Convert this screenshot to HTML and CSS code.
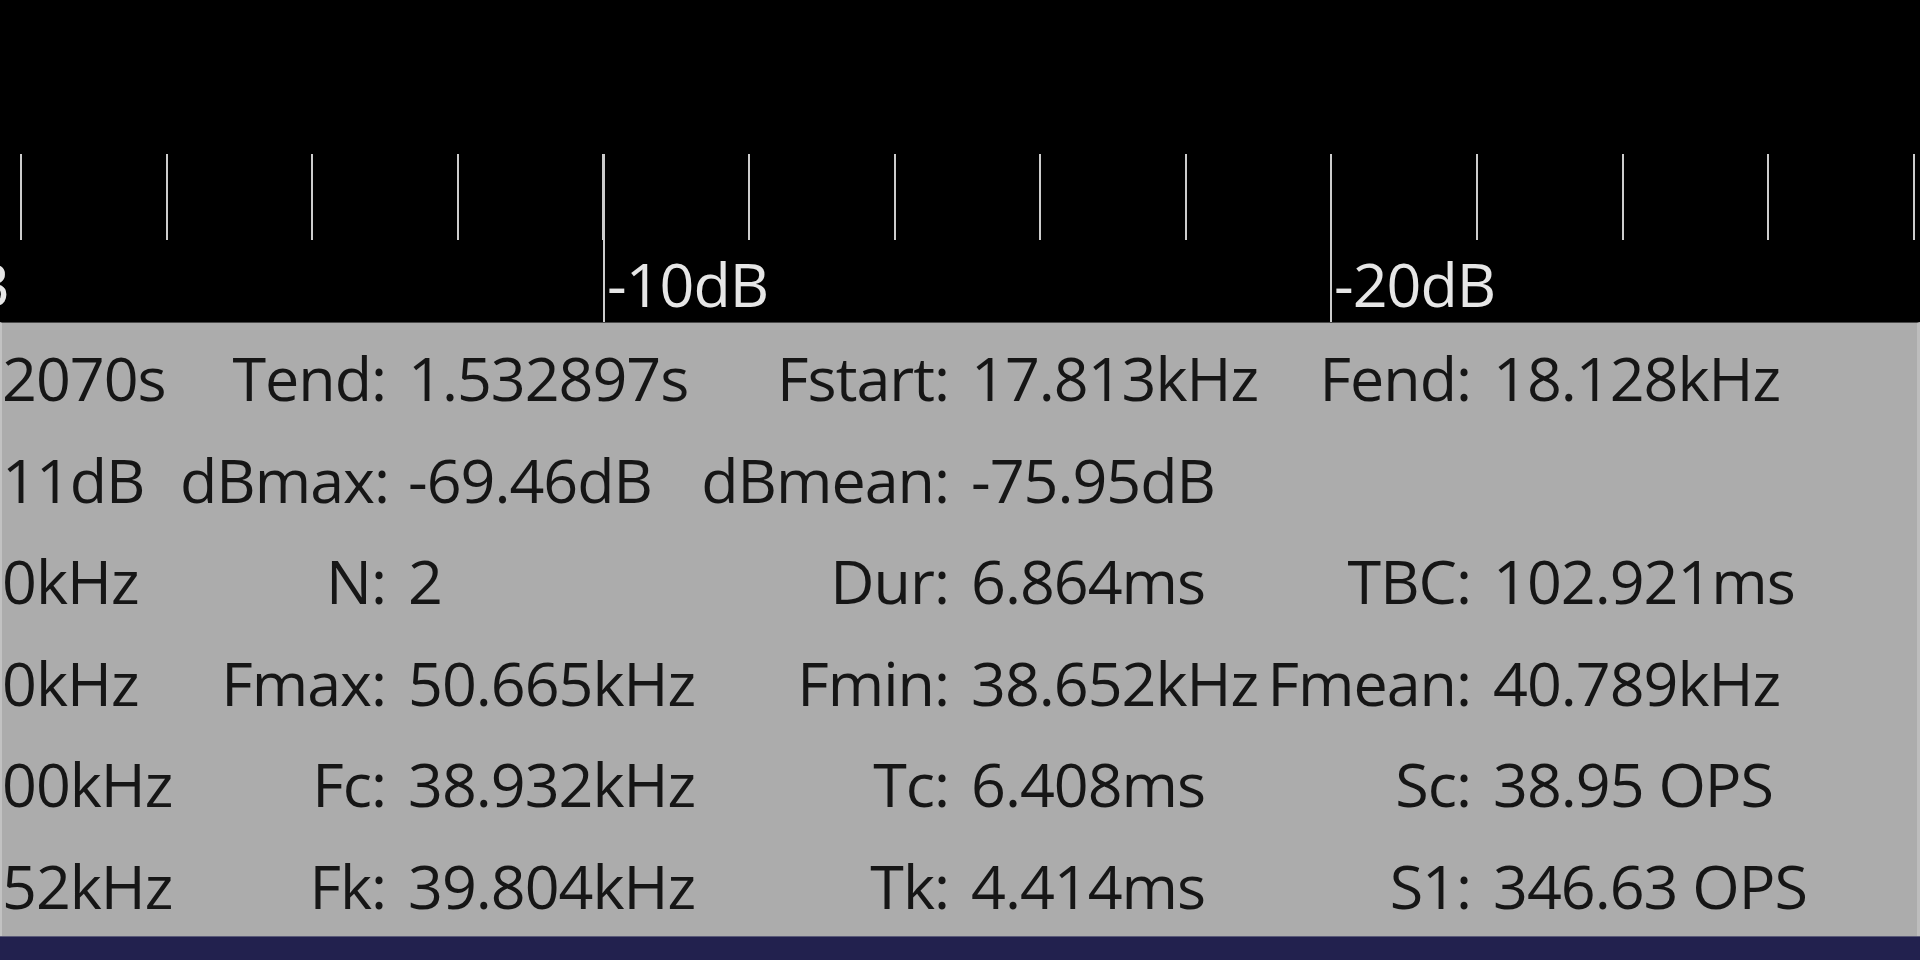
FILE: index.html
```html
<!DOCTYPE html>
<html>
<head>
<meta charset="utf-8">
<title>Measurements</title>
<link rel="stylesheet" href="styles.css">
</head>
<body>
<div class="screen">
  <div class="axis">
    <div class="ticks"></div>
    <div class="major major-a"></div>
    <div class="major major-b"></div>
    <span class="db db-0">0dB</span>
    <span class="db db-a">-10dB</span>
    <span class="db db-b">-20dB</span>
  </div>
  <div class="panel">
    <div class="row">
      <span class="v first">2070s</span>
      <span class="k">Tend:</span><span class="v">1.532897s</span>
      <span class="k">Fstart:</span><span class="v">17.813kHz</span>
      <span class="k">Fend:</span><span class="v">18.128kHz</span>
    </div>
    <div class="row">
      <span class="v first">11dB</span>
      <span class="k">dBmax:</span><span class="v">-69.46dB</span>
      <span class="k">dBmean:</span><span class="v">-75.95dB</span>
      <span class="k"></span><span class="v"></span>
    </div>
    <div class="row">
      <span class="v first">0kHz</span>
      <span class="k">N:</span><span class="v">2</span>
      <span class="k">Dur:</span><span class="v">6.864ms</span>
      <span class="k">TBC:</span><span class="v">102.921ms</span>
    </div>
    <div class="row">
      <span class="v first">0kHz</span>
      <span class="k">Fmax:</span><span class="v">50.665kHz</span>
      <span class="k">Fmin:</span><span class="v">38.652kHz</span>
      <span class="k">Fmean:</span><span class="v">40.789kHz</span>
    </div>
    <div class="row">
      <span class="v first">00kHz</span>
      <span class="k">Fc:</span><span class="v">38.932kHz</span>
      <span class="k">Tc:</span><span class="v">6.408ms</span>
      <span class="k">Sc:</span><span class="v">38.95 OPS</span>
    </div>
    <div class="row">
      <span class="v first">52kHz</span>
      <span class="k">Fk:</span><span class="v">39.804kHz</span>
      <span class="k">Tk:</span><span class="v">4.414ms</span>
      <span class="k">S1:</span><span class="v">346.63 OPS</span>
    </div>
  </div>
  <div class="status"></div>
</div>
</body>
</html>
```
FILE: styles.css
```css
html, body {
  margin: 0;
  padding: 0;
  background: #000;
}

.screen {
  width: 1920px;
  height: 960px;
  display: flex;
  flex-direction: column;
  overflow: hidden;
  font-family: "Open Sans", "Noto Sans", sans-serif;
  font-size: 61px;
  letter-spacing: -1px;
}

.axis {
  position: relative;
  height: 322px;
  flex: none;
  background: #000;
}

.ticks {
  margin-top: 154px;
  height: 86px;
  background-image: repeating-linear-gradient(to right,
    transparent 0, transparent 20px,
    #cccccc 20px, #cccccc 22px,
    transparent 22px, transparent 145.6px);
}

.major {
  position: absolute;
  top: 154px;
  bottom: 0;
  width: 2px;
  background: #cccccc;
}
.major-a { left: 603px; }
.major-b { left: 1330px; }

.db {
  position: absolute;
  top: 253px;
  line-height: 61px;
  color: #e6e6e6;
  white-space: nowrap;
}
.db-0 { left: -100px; }
.db-a { left: 607px; }
.db-b { left: 1334px; }

.panel {
  flex: 1;
  background: #acacac;
  border-top: 1px solid #4a4a4a;
  border-left: 2px solid #c2c2c2;
  border-right: 3px solid #bdbdbd;
  padding-top: 4px;
  color: #161616;
  overflow: hidden;
}

.row {
  display: grid;
  grid-template-columns: 178px 228px 292px 271px 291px 231px 1fr;
  height: 101.6px;
  line-height: 101.6px;
  white-space: nowrap;
}

.k {
  text-align: right;
  padding-right: 22px;
}

.v {
  text-align: left;
}

.first {
  overflow: hidden;
}

.status {
  height: 23px;
  flex: none;
  background: #22214e;
  border-top: 1px solid #5a5a78;
}
```
